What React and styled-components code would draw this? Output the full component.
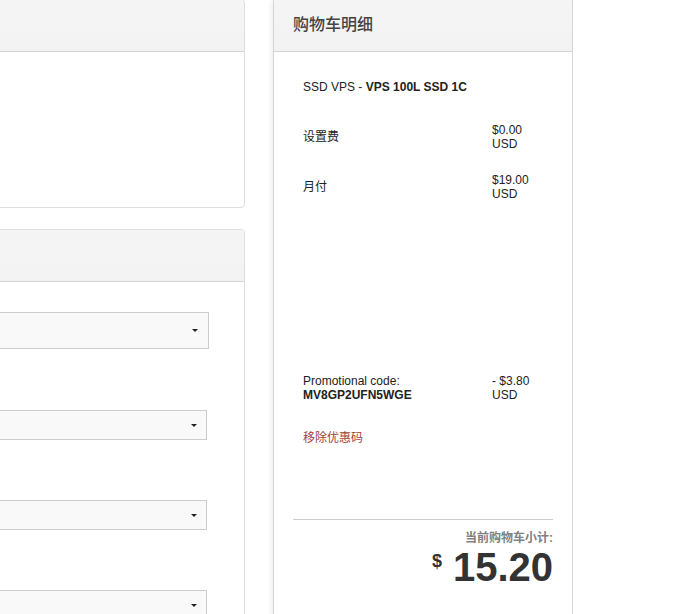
import React from 'react';
import styled, { createGlobalStyle } from 'styled-components';

const GlobalStyle = createGlobalStyle`
  html, body {
    margin: 0;
    padding: 0;
    background: #fff;
    overflow: hidden;
  }
  body {
    font-family: "Liberation Sans", Arial, "Noto Sans CJK SC", sans-serif;
    font-size: 12px;
    color: #222;
  }
`

const Page = styled.div`
  display: flex;
  align-items: flex-start;
  gap: 28px;
  margin: -1px 0 0 -200px;
  height: 640px;
`

const LeftColumn = styled.div`
  width: 445px;
  flex-shrink: 0;
  display: flex;
  flex-direction: column;
  gap: 21px;
`

const Panel = styled.div`
  background: #fff;
  border: 1px solid #ddd;
  border-radius: 4px;
  overflow: hidden;
`

const PanelHeading = styled.div`
  height: 52px;
  box-sizing: border-box;
  padding: 15px 19px 16px;
  background: linear-gradient(to bottom, #f5f5f5 0%, #f2f2f2 100%);
  border-bottom: 1px solid #d4d4d4;
`

const PanelTitle = styled.h3`
  margin: 0;
  font-family: "Liberation Sans", Arial, "Noto Sans CJK SC", sans-serif;
  font-size: 16px;
  line-height: 20px;
  font-weight: 500;
  color: #444;
`

const EmptyBody = styled.div`
  height: ${({ h }) => h}px;
`

const FormBody = styled.div`
  padding: 30px 0 40px;
  min-height: 340px;
  display: flex;
  flex-direction: column;
  align-items: flex-end;
`

const FakeSelect = styled.div`
  box-sizing: border-box;
  width: 300px;
  height: ${({ tall }) => (tall ? 37 : 30)}px;
  margin-right: ${({ tall }) => (tall ? 35 : 37)}px;
  margin-top: ${({ gap }) => gap}px;
  background: #f9f9f9;
  border: 1px solid #ccc;
  display: flex;
  align-items: center;
  justify-content: flex-end;
  padding-right: ${({ tall }) => (tall ? 10 : 9)}px;
`

const Caret = styled.span`
  width: 0;
  height: 0;
  border-left: 3px solid transparent;
  border-right: 3px solid transparent;
  border-top: 3px solid #222;
`

const Summary = styled.div`
  width: 300px;
  flex-shrink: 0;
  box-sizing: border-box;
  border: 1px solid #d6d6d6;
  background: #fff;
  min-height: 660px;
  box-shadow: -4px 0 4px -2px rgba(0, 0, 0, 0.07);
`

const SummaryBody = styled.div`
  padding: 28px 19px 0;
`

const Items = styled.div`
  padding: 0 10px;
  line-height: 14px;
`

const ProductName = styled.div`
  margin-bottom: 29px;
  color: #222;

  b {
    font-weight: bold;
  }
`

const Line = styled.div`
  display: flex;
  align-items: ${({ top }) => (top ? 'flex-start' : 'center')};
  margin-top: ${({ gap }) => gap || 0}px;
`

const Label = styled.div`
  flex: 1;

  b {
    font-weight: bold;
  }
`

const Price = styled.div`
  width: 51px;
`

const RemoveLink = styled.a`
  display: block;
  margin-top: 29px;
  color: #a0423a;
  text-decoration: none;
  line-height: 14px;
`

const Totals = styled.div`
  margin-top: 74px;
  border-top: 1px solid #ccc;
  padding-top: 11px;
  text-align: right;
`

const SubtotalLabel = styled.div`
  font-weight: bold;
  color: #808080;
  line-height: 14px;
`

const Amount = styled.div`
  display: flex;
  justify-content: flex-end;
  align-items: flex-start;
  margin-top: 2px;
  color: #333;
  font-weight: bold;
`

const Currency = styled.span`
  font-size: 18px;
  line-height: 18px;
  margin-top: 5px;
  margin-right: 11px;
`

const Total = styled.span`
  font-size: 40px;
  line-height: 40px;
`

export default function App() {
  return (
    <>
      <GlobalStyle />
      <Page>
        <LeftColumn>
          <Panel>
            <PanelHeading />
            <EmptyBody h={155} />
          </Panel>
          <Panel>
            <PanelHeading />
            <FormBody>
              <FakeSelect tall gap={0}><Caret /></FakeSelect>
              <FakeSelect gap={61}><Caret /></FakeSelect>
              <FakeSelect gap={60}><Caret /></FakeSelect>
              <FakeSelect gap={60}><Caret /></FakeSelect>
            </FormBody>
          </Panel>
        </LeftColumn>

        <Summary>
          <PanelHeading>
            <PanelTitle>购物车明细</PanelTitle>
          </PanelHeading>
          <SummaryBody>
            <Items>
              <ProductName>
                SSD VPS - <b>VPS 100L SSD 1C</b>
              </ProductName>
              <Line>
                <Label>设置费</Label>
                <Price>$0.00 USD</Price>
              </Line>
              <Line gap={22}>
                <Label>月付</Label>
                <Price>$19.00 USD</Price>
              </Line>
              <Line top gap={173}>
                <Label>
                  Promotional code:
                  <br />
                  <b>MV8GP2UFN5WGE</b>
                </Label>
                <Price>- $3.80 USD</Price>
              </Line>
              <RemoveLink href="#">移除优惠码</RemoveLink>
            </Items>
            <Totals>
              <SubtotalLabel>当前购物车小计:</SubtotalLabel>
              <Amount>
                <Currency>$</Currency>
                <Total>15.20</Total>
              </Amount>
            </Totals>
          </SummaryBody>
        </Summary>
      </Page>
    </>
  );
}
